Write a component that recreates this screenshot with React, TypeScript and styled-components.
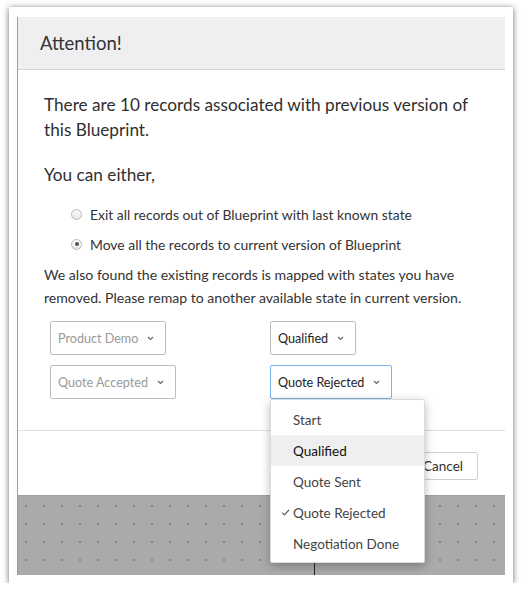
import React from "react";
import styled, { createGlobalStyle } from "styled-components";

const GlobalStyle = createGlobalStyle`
  html, body { margin: 0; padding: 0; background: #ffffff; }
  body { font-family: "Lato", "Open Sans", sans-serif; color: #333; }
  * { box-sizing: border-box; }
`;

const Frame = styled.div`
  margin: 7px 0 0 9px;
  width: 504px;
  height: 576px;
  background: #fff;
  padding: 10px 8px 8px 8px;
  box-shadow: 0 1px 6px rgba(0, 0, 0, 0.6);
  display: flex;
`;

const Screen = styled.div`
  flex: 1;
  display: flex;
  flex-direction: column;
  border-left: 1px solid #9a9a9a;
  background: #fff;
`;

const Header = styled.div`
  height: 53px;
  flex: none;
  background: #efeff1;
  border-bottom: 1px solid #d6d6d6;
  display: flex;
  align-items: center;
  padding-left: 22px;
  font-size: 18.5px;
  color: #333;
`;

const Body = styled.div`
  flex: none;
  padding: 22px 20px 31px 26px;
`;

const Lead = styled.p<{ $gap?: number }>`
  margin: 0 0 ${(p) => p.$gap ?? 0}px 0;
  font-size: 17.2px;
  line-height: 25px;
  color: #2f2f2f;
`;

const Options = styled.div`
  display: flex;
  flex-direction: column;
  padding-left: 27px;
  margin-bottom: 4px;
`;

const OptionRow = styled.label`
  height: 30px;
  display: flex;
  align-items: center;
  gap: 8px;
  font-size: 13.9px;
  color: #333;
`;

const Radio = styled.span<{ $checked?: boolean }>`
  width: 11px;
  height: 11px;
  border-radius: 50%;
  border: 1px solid #b9b9b9;
  background: linear-gradient(#fdfdfd, #e6e6e6);
  display: flex;
  align-items: center;
  justify-content: center;
  &::after {
    content: "";
    width: 4px;
    height: 4px;
    border-radius: 50%;
    background: ${(p) => (p.$checked ? "#555" : "transparent")};
  }
`;

const Note = styled.p`
  margin: 0;
  font-size: 14.1px;
  line-height: 23px;
  color: #333;
`;

const MapGrid = styled.div`
  margin-top: 12px;
  margin-left: 6px;
  display: grid;
  grid-template-columns: 220px 1fr;
  row-gap: 10px;
`;

const SelectWrap = styled.div`
  position: relative;
  justify-self: start;
`;

const SelectBox = styled.div<{ $placeholder?: boolean; $focused?: boolean }>`
  height: 34px;
  display: flex;
  align-items: center;
  gap: 9px;
  padding: 0 11px 0 7px;
  border: 1px solid ${(p) => (p.$focused ? "#79b4ec" : "#bdbdbd")};
  border-radius: 2px;
  background: #fff;
  font-size: 12.6px;
  color: ${(p) => (p.$placeholder ? "#9a9a9a" : "#222")};
`;

const Chevron = styled.svg`
  width: 7px;
  height: 5px;
  flex: none;
`;

const Menu = styled.ul`
  position: absolute;
  top: 100%;
  left: 0;
  width: 155px;
  margin: 0;
  padding: 4px 0 3px;
  list-style: none;
  background: #fff;
  border: 1px solid #dcdcdc;
  border-radius: 2px;
  box-shadow: 0 3px 10px rgba(0, 0, 0, 0.28);
  z-index: 10;
`;

const MenuItem = styled.li<{ $active?: boolean }>`
  height: 31px;
  display: flex;
  align-items: center;
  padding-left: 22px;
  position: relative;
  font-size: 13.5px;
  color: ${(p) => (p.$active ? "#111" : "#444")};
  background: ${(p) => (p.$active ? "#efefef" : "transparent")};
`;

const Check = styled.svg`
  position: absolute;
  left: 10px;
  top: 12px;
  width: 9px;
  height: 7px;
`;

const Footer = styled.div`
  height: 65px;
  flex: none;
  border-top: 1px solid #dedede;
  display: flex;
  align-items: center;
  justify-content: flex-end;
  padding-right: 27px;
  padding-top: 6px;
`;

const Button = styled.button`
  height: 28px;
  padding: 0 14px 0 16px;
  border: 1px solid #cfcfcf;
  border-radius: 2px;
  background: #fff;
  font-family: inherit;
  font-size: 13.5px;
  color: #333;
`;

const Canvas = styled.div`
  flex: 1;
  position: relative;
  background-color: #aaaaaa;
  background-image: radial-gradient(circle, #858585 0.8px, transparent 1.1px);
  background-size: 18px 18px;
  background-position: -1px 1px;
  border-top: 1px solid #a0a0a0;
`;

const Connector = styled.div`
  position: absolute;
  left: 296px;
  top: 40px;
  bottom: 0;
  width: 1px;
  background: #222;
`;

const ChevronIcon = () => (
  <Chevron viewBox="0 0 7 5">
    <polyline points="1,1 3.5,3.5 6,1" fill="none" stroke="#666" strokeWidth="1.1" />
  </Chevron>
);

const options = ["Start", "Qualified", "Quote Sent", "Quote Rejected", "Negotiation Done"];

export default function App() {
  return (
    <>
      <GlobalStyle />
      <Frame>
        <Screen>
          <Header>Attention!</Header>
          <Body>
            <Lead $gap={20}>
              There are 10 records associated with previous version of this Blueprint.
            </Lead>
            <Lead $gap={12}>You can either,</Lead>
            <Options>
              <OptionRow>
                <Radio />
                Exit all records out of Blueprint with last known state
              </OptionRow>
              <OptionRow>
                <Radio $checked />
                Move all the records to current version of Blueprint
              </OptionRow>
            </Options>
            <Note>
              We also found the existing records is mapped with states you have removed. Please
              remap to another available state in current version.
            </Note>
            <MapGrid>
              <SelectWrap>
                <SelectBox $placeholder>
                  Product Demo
                  <ChevronIcon />
                </SelectBox>
              </SelectWrap>
              <SelectWrap>
                <SelectBox>
                  Qualified
                  <ChevronIcon />
                </SelectBox>
              </SelectWrap>
              <SelectWrap>
                <SelectBox $placeholder>
                  Quote Accepted
                  <ChevronIcon />
                </SelectBox>
              </SelectWrap>
              <SelectWrap>
                <SelectBox $focused>
                  Quote Rejected
                  <ChevronIcon />
                </SelectBox>
                <Menu>
                  {options.map((o) => (
                    <MenuItem key={o} $active={o === "Qualified"}>
                      {o === "Quote Rejected" && (
                        <Check viewBox="0 0 9 7">
                          <polyline points="1,3.5 3.3,6 8,1" fill="none" stroke="#555" strokeWidth="1.1" />
                        </Check>
                      )}
                      {o}
                    </MenuItem>
                  ))}
                </Menu>
              </SelectWrap>
            </MapGrid>
          </Body>
          <Footer>
            <Button>Cancel</Button>
          </Footer>
          <Canvas>
            <Connector />
          </Canvas>
        </Screen>
      </Frame>
    </>
  );
}
